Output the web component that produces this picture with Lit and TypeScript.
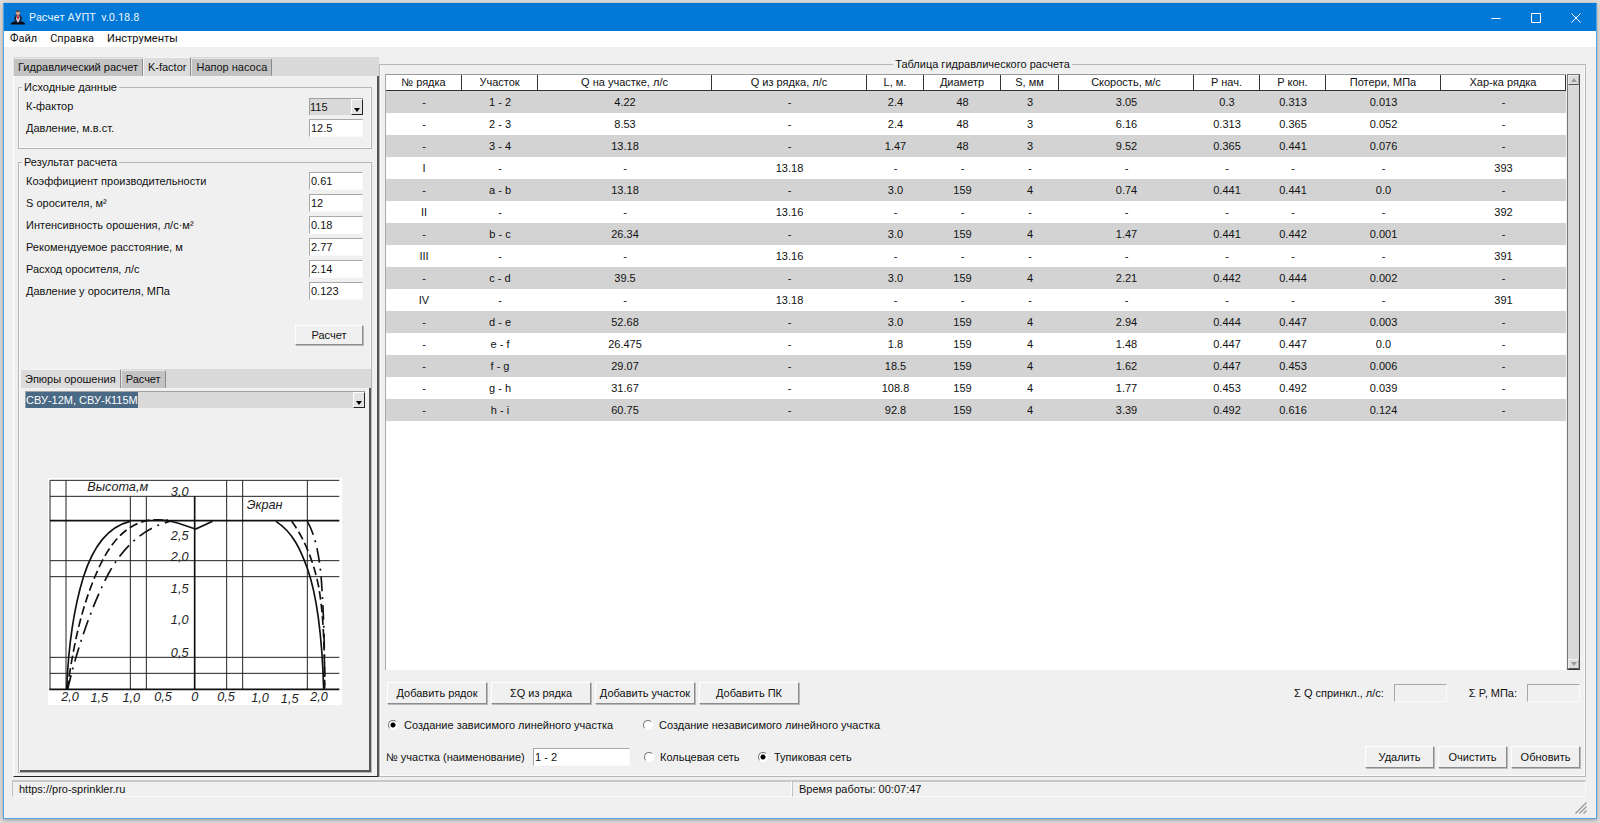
import { LitElement, html, svg, css } from "lit";
import { customElement, property, state } from "lit/decorators.js";
import { classMap } from "lit/directives/class-map.js";

const controls = css`
  * {
    box-sizing: border-box;
  }
  button,
  input,
  select {
    font: inherit;
    color: inherit;
    margin: 0;
    border-radius: 0;
  }
  .btn {
    height: 22px;
    padding: 0;
    background: #f0f0f0;
    border: 1px solid;
    border-color: #fff #8c8c8c #8c8c8c #fff;
    box-shadow: 1px 1px 0 #b9b9b9;
    white-space: nowrap;
  }
  .field {
    height: 18px;
    padding: 0 1px;
    background: #fff;
    border: 1px solid;
    border-color: #a8a8a8 #fafafa #fafafa #a8a8a8;
    outline: none;
  }
  .field:disabled {
    background: #f0f0f0;
  }
  fieldset {
    margin: 0;
    min-width: 0;
    border: 1px solid #b6b6b6;
    box-shadow: inset -1px -1px 0 #fafafa, inset 1px 0 0 #fafafa;
  }
  legend {
    padding: 0 2px;
    line-height: 14px;
  }
`;

interface SectionRow {
  cells: string[];
}

const COLUMNS: { title: string; width: number }[] = [
  { title: "№ рядка", width: 76 },
  { title: "Участок", width: 76 },
  { title: "Q на участке, л/с", width: 174 },
  { title: "Q из рядка, л/с", width: 155 },
  { title: "L, м.", width: 57 },
  { title: "Диаметр", width: 77 },
  { title: "S, мм", width: 58 },
  { title: "Скорость, м/с", width: 135 },
  { title: "P нач.", width: 66 },
  { title: "P кон.", width: 66 },
  { title: "Потери, МПа", width: 115 },
  { title: "Хар-ка рядка", width: 125 },
];

const section = (
  name: string, q: string, l: string, d: string, s: string,
  v: string, p1: string, p2: string, loss: string
): SectionRow => ({ cells: ["-", name, q, "-", l, d, s, v, p1, p2, loss, "-"] });

const branch = (no: string, q: string, k: string): SectionRow => ({
  cells: [no, "-", "-", q, "-", "-", "-", "-", "-", "-", "-", k],
});

const ROWS: SectionRow[] = [
  section("1 - 2", "4.22", "2.4", "48", "3", "3.05", "0.3", "0.313", "0.013"),
  section("2 - 3", "8.53", "2.4", "48", "3", "6.16", "0.313", "0.365", "0.052"),
  section("3 - 4", "13.18", "1.47", "48", "3", "9.52", "0.365", "0.441", "0.076"),
  branch("I", "13.18", "393"),
  section("a - b", "13.18", "3.0", "159", "4", "0.74", "0.441", "0.441", "0.0"),
  branch("II", "13.16", "392"),
  section("b - c", "26.34", "3.0", "159", "4", "1.47", "0.441", "0.442", "0.001"),
  branch("III", "13.16", "391"),
  section("c - d", "39.5", "3.0", "159", "4", "2.21", "0.442", "0.444", "0.002"),
  branch("IV", "13.18", "391"),
  section("d - e", "52.68", "3.0", "159", "4", "2.94", "0.444", "0.447", "0.003"),
  section("e - f", "26.475", "1.8", "159", "4", "1.48", "0.447", "0.447", "0.0"),
  section("f - g", "29.07", "18.5", "159", "4", "1.62", "0.447", "0.453", "0.006"),
  section("g - h", "31.67", "108.8", "159", "4", "1.77", "0.453", "0.492", "0.039"),
  section("h - i", "60.75", "92.8", "159", "4", "3.39", "0.492", "0.616", "0.124"),
];

/** Row of notebook tabs. */
@customElement("tab-strip")
export class TabStrip extends LitElement {
  @property({ attribute: false }) tabs: string[] = [];
  @property({ type: Number }) active = 0;

  static styles = css`
    :host {
      display: block;
      background: #d9d9d9;
    }
    .strip {
      display: flex;
      align-items: flex-end;
      height: 19px;
    }
    .tab {
      font: inherit;
      color: inherit;
      height: 18px;
      padding: 0 4px;
      margin: 0;
      background: #c3c3c3;
      border: 1px solid;
      border-color: #e6e6e6 #8a8a8a #c3c3c3 #e6e6e6;
      border-radius: 0 2px 0 0;
      white-space: nowrap;
    }
    .active {
      height: 19px;
      background: #dcdcdc;
      border-color: #f4f4f4 #8a8a8a #dcdcdc #f4f4f4;
      border-bottom: 0;
    }
  `;

  render() {
    return html`<div class="strip" role="tablist">
      ${this.tabs.map(
        (t, i) => html`<button
          class=${classMap({ tab: true, active: i === this.active })}
          role="tab"
          aria-selected=${i === this.active ? "true" : "false"}
          @click=${() => (this.active = i)}
        >${t}</button>`
      )}
    </div>`;
  }
}

/** Spray pattern diagram: height against distance from the sprinkler. */
@customElement("spray-diagram")
export class SprayDiagram extends LitElement {
  static styles = css`
    :host {
      display: block;
    }
    .chart {
      display: block;
      width: 294px;
      height: 227px;
      background: #fff;
      font-family: "Liberation Sans", Arial, sans-serif;
      font-style: italic;
      font-size: 38px;
      fill: #222;
    }
    .grid {
      stroke: #222;
      stroke-width: 3;
      fill: none;
    }
    .curve {
      stroke: #111;
      stroke-width: 5;
      fill: none;
    }
    .dash {
      stroke-dasharray: 26 12;
    }
    .dashdot {
      stroke-dasharray: 44 18 6 18;
    }
    .axis {
      text-anchor: middle;
    }
  `;

  render() {
    const vertical = [
      [60, 61], [108, 61], [301, 109], [349, 109], [590, 61], [638, 61], [832, 61],
    ];
    const horizontal = [61, 109, 302, 350, 592, 640];
    const heights: [string, number][] = [
      ["3,0", 108], ["2,5", 239], ["2,0", 302], ["1,5", 398], ["1,0", 493], ["0,5", 590],
    ];
    const distances: [string, number, number][] = [
      ["2,0", 120, 723], ["1,5", 208, 727], ["1,0", 304, 725], ["0,5", 399, 724], ["0", 494, 724],
      ["0,5", 588, 724], ["1,0", 690, 725], ["1,5", 779, 728], ["2,0", 867, 724],
    ];
    return html`<svg class="chart" viewBox="54 54 882 681" role="img" aria-label="Эпюры орошения">
      ${vertical.map(([x, y]) => svg`<path class="grid" d="M${x} ${y}V688"/>`)}
      ${horizontal.map((y) => svg`<path class="grid" d="M60 ${y}H928"/>`)}
      <path class="curve" d="M60 182H928M58 688H928M494 109V688" />
      <path class="curve" d="M110 688C115 560 130 450 160 352C188 262 235 200 300 184" />
      <path class="curve" d="M738 184C790 218 812 270 832 325C862 410 877 550 881 688" />
      <path class="curve dash" d="M112 688C132 540 160 420 212 312C245 245 290 190 362 180H414" />
      <path class="curve dash" d="M785 184C820 230 850 300 866 380C880 460 884 560 884 688" />
      <path class="curve dashdot" d="M113 688C140 570 184 440 235 342C270 276 324 220 384 196L420 184" />
      <path class="curve dashdot" d="M832 184C860 232 872 310 876 390C882 480 884 580 884 688" />
      <path class="curve" d="M370 180C420 178 450 192 497 207L548 184" />
      <text x="172" y="94">Высота,м</text>
      <text x="650" y="147">Экран</text>
      ${heights.map(([t, y]) => svg`<text class="axis" x="449" y=${y}>${t}</text>`)}
      ${distances.map(([t, x, y]) => svg`<text class="axis" x=${x} y=${y}>${t}</text>`)}
    </svg>`;
  }
}

/** Left notebook with the K-factor calculation. */
@customElement("k-factor-panel")
export class KFactorPanel extends LitElement {
  static styles = [
    controls,
    css`
      :host {
        display: flex;
        flex-direction: column;
      }
      .pane {
        flex: 1;
        display: flex;
        flex-direction: column;
        gap: 6px;
        padding: 4px 5px 3px 4px;
        border: solid;
        border-width: 0 2px 1px 1px;
        border-color: #333 #555 #222 #fff;
      }
      .source,
      .result {
        padding: 1px 0 0 1px;
      }
      .source {
        padding-bottom: 9px;
      }
      .result {
        flex: 1;
        display: flex;
        flex-direction: column;
      }
      .caption {
        margin-left: 2px;
      }
      .rows {
        padding: 0 8px 0 6px;
      }
      .row {
        display: grid;
        grid-template-columns: 1fr 54px;
        align-items: center;
        height: 22px;
      }
      .combo {
        display: grid;
        grid-template-columns: 1fr 12px;
        height: 17px;
        background: #d9d9d9;
        border-top: 1px solid #a0a0a0;
        border-left: 1px solid #a0a0a0;
      }
      .combo-select {
        grid-area: 1 / 1 / 2 / 3;
        appearance: none;
        min-width: 0;
        height: 16px;
        padding: 0;
        background: transparent;
        border: 0;
        outline: none;
      }
      .marked {
        color: #fff;
        background: linear-gradient(#4a6984, #4a6984) no-repeat 0 0 / 112px 100%;
      }
      .arrow {
        grid-area: 1 / 2;
        pointer-events: none;
        background: #e4e4e4;
        border: 1px solid;
        border-color: #fff #222 #222 #fff;
        display: flex;
        align-items: flex-end;
        justify-content: center;
        padding-bottom: 2px;
      }
      .actions {
        display: flex;
        justify-content: flex-end;
        padding: 23px 8px 24px 0;
      }
      .calc {
        width: 68px;
        height: 20px;
      }
      .inner {
        flex: 1;
        display: flex;
        flex-direction: column;
        padding: 3px 4px 0 5px;
        border: solid;
        border-width: 0 2px 2px 0;
        border-color: #555;
      }
      .figure {
        flex: 1;
        display: flex;
        align-items: center;
        justify-content: center;
        padding-top: 5px;
      }
    `,
  ];

  private results: [string, string][] = [
    ["Коэффициент производительности", "0.61"],
    ["S оросителя, м²", "12"],
    ["Интенсивность орошения, л/с·м²", "0.18"],
    ["Рекомендуемое расстояние, м", "2.77"],
    ["Расход оросителя, л/с", "2.14"],
    ["Давление у оросителя, МПа", "0.123"],
  ];

  private arrow() {
    return html`<span class="arrow"
      ><svg width="6" height="4" viewBox="0 0 6 4"><path d="M0 0H6L3 4Z" fill="#000" /></svg
    ></span>`;
  }

  render() {
    return html`
      <tab-strip .tabs=${["Гидравлический расчет", "K-factor", "Напор насоса"]} .active=${1}></tab-strip>
      <div class="pane">
        <fieldset class="source">
          <legend class="caption">Исходные данные</legend>
          <div class="rows">
            <div class="row">
              <label for="kf">К-фактор</label>
              <span class="combo">
                <select class="combo-select" id="kf"><option>115</option></select>
                ${this.arrow()}
              </span>
            </div>
            <div class="row">
              <label for="pressure">Давление, м.в.ст.</label>
              <input class="field" id="pressure" value="12.5" />
            </div>
          </div>
        </fieldset>
        <fieldset class="result">
          <legend class="caption">Результат расчета</legend>
          <div class="rows">
            ${this.results.map(
              ([name, value], i) => html`<div class="row">
                <label for="res${i}">${name}</label>
                <input class="field" id="res${i}" .value=${value} />
              </div>`
            )}
          </div>
          <div class="actions"><button class="btn calc">Расчет</button></div>
          <tab-strip .tabs=${["Эпюры орошения", "Расчет"]} .active=${0}></tab-strip>
          <div class="inner">
            <span class="combo">
              <select class="combo-select marked" aria-label="Ороситель">
                <option>СВУ-12М, СВУ-К115М</option>
              </select>
              ${this.arrow()}
            </span>
            <div class="figure"><spray-diagram></spray-diagram></div>
          </div>
        </fieldset>
      </div>
    `;
  }
}

/** Table of the hydraulic calculation with the controls below it. */
@customElement("hydraulic-table")
export class HydraulicTable extends LitElement {
  @state() private kind = 0;
  @state() private net = 1;

  static styles = [
    controls,
    css`
      :host {
        display: flex;
        min-width: 0;
      }
      .group {
        flex: 1;
        display: flex;
        flex-direction: column;
        padding: 3px 5px 8px 5px;
      }
      .title {
        margin: 0 auto;
      }
      .view {
        flex: 1;
        display: grid;
        grid-template-columns: 1fr 13px;
        gap: 1px;
        margin-bottom: 12px;
      }
      .sheet {
        background: #fff;
        border-top: 1px solid #999;
        border-left: 1px solid #aaa;
      }
      .grid {
        width: 100%;
        table-layout: fixed;
        border-collapse: separate;
        border-spacing: 0;
        text-align: center;
      }
      .head {
        height: 16px;
        padding: 0;
        font-weight: normal;
        line-height: 15px;
        border-right: 1px solid #333;
        border-bottom: 1px solid #333;
        white-space: nowrap;
      }
      .cell {
        height: 22px;
        padding: 0;
      }
      .odd {
        background: #d3d3d3;
      }
      .scroll {
        display: flex;
        flex-direction: column;
        justify-content: space-between;
        background: #d9d9d9;
        border: 1px solid;
        border-color: #777 #444 #333 #777;
      }
      .scroll-btn {
        display: flex;
        align-items: center;
        justify-content: center;
        height: 10px;
        padding: 0;
        background: #dcdcdc;
        border: 1px solid;
        border-color: #eee #aaa #555 #eee;
      }
      .line {
        display: flex;
        align-items: center;
        height: 22px;
      }
      .buttons {
        gap: 4px;
        padding-left: 2px;
      }
      .wide {
        width: 100px;
      }
      .mid {
        width: 69px;
      }
      .sums {
        display: flex;
        align-items: center;
        gap: 10px;
        margin-left: auto;
      }
      .second {
        margin-left: 12px;
      }
      .sum {
        width: 53px;
      }
      .kinds {
        margin: 10px 0;
        padding-left: 3px;
      }
      .name {
        width: 97px;
      }
      .bottom {
        padding-left: 1px;
      }
      .name-label {
        width: 147px;
      }
      .radio {
        display: flex;
        align-items: center;
        gap: 6px;
        white-space: nowrap;
      }
      .first {
        width: 255px;
      }
      .ring {
        width: 114px;
        margin-left: 14px;
      }
      .dot {
        appearance: none;
        width: 10px;
        height: 10px;
        border-radius: 50%;
        background: #fff;
        border: 1px solid;
        border-color: #777 #fff #fff #777;
      }
      .dot:checked {
        background: radial-gradient(circle at center, #000 0 2px, #fff 3px);
      }
      .trio {
        display: flex;
        gap: 4px;
        margin-left: auto;
      }
    `,
  ];

  render() {
    return html`<fieldset class="group">
      <legend class="title">Таблица гидравлического расчета</legend>
      <div class="view">
        <div class="sheet">
          <table class="grid">
            <colgroup>
              ${COLUMNS.map((c) => html`<col style="width:${c.width}px" />`)}
            </colgroup>
            <thead>
              <tr>${COLUMNS.map((c) => html`<th class="head" scope="col">${c.title}</th>`)}</tr>
            </thead>
            <tbody>
              ${ROWS.map(
                (r, i) => html`<tr class=${classMap({ odd: i % 2 === 0 })}>
                  ${r.cells.map((c) => html`<td class="cell">${c}</td>`)}
                </tr>`
              )}
            </tbody>
          </table>
        </div>
        <div class="scroll">
          <button class="scroll-btn" aria-label="Вверх">
            <svg width="6" height="4" viewBox="0 0 6 4"><path d="M0 4H6L3 0Z" fill="#999" /></svg>
          </button>
          <button class="scroll-btn" aria-label="Вниз">
            <svg width="6" height="4" viewBox="0 0 6 4"><path d="M0 0H6L3 4Z" fill="#999" /></svg>
          </button>
        </div>
      </div>
      <div class="line buttons">
        <button class="btn wide">Добавить рядок</button>
        <button class="btn wide">ΣQ из рядка</button>
        <button class="btn wide">Добавить участок</button>
        <button class="btn wide">Добавить ПК</button>
        <div class="sums">
          <label for="sq">Σ Q спринкл., л/с:</label>
          <input class="field sum" id="sq" disabled />
          <label class="second" for="sp">Σ P, МПа:</label>
          <input class="field sum" id="sp" disabled />
        </div>
      </div>
      <div class="line kinds">
        <label class="radio first">
          <input class="dot" type="radio" name="kind" .checked=${this.kind === 0} @change=${() => (this.kind = 0)} />
          Создание зависимого линейного участка
        </label>
        <label class="radio">
          <input class="dot" type="radio" name="kind" .checked=${this.kind === 1} @change=${() => (this.kind = 1)} />
          Создание независимого линейного участка
        </label>
      </div>
      <div class="line bottom">
        <label class="name-label" for="name">№ участка (наименование)</label>
        <input class="field name" id="name" value="1 - 2" />
        <label class="radio ring">
          <input class="dot" type="radio" name="net" .checked=${this.net === 0} @change=${() => (this.net = 0)} />
          Кольцевая сеть
        </label>
        <label class="radio">
          <input class="dot" type="radio" name="net" .checked=${this.net === 1} @change=${() => (this.net = 1)} />
          Тупиковая сеть
        </label>
        <div class="trio">
          <button class="btn mid">Удалить</button>
          <button class="btn mid">Очистить</button>
          <button class="btn mid">Обновить</button>
        </div>
      </div>
    </fieldset>`;
  }
}

@customElement("app-root")
export class AppRoot extends LitElement {
  static styles = css`
    :host {
      display: flex;
      box-sizing: border-box;
      min-height: 100vh;
      padding: 3px 3px 4px;
      background: #dcdcdc;
      font: 11px "Liberation Sans", Arial, sans-serif;
      color: #111;
    }
    * {
      box-sizing: border-box;
    }
    .window {
      flex: 1;
      min-width: 0;
      display: flex;
      flex-direction: column;
      background: #f0f0f0;
      border: 1px solid #5ba3dc;
      border-top-color: #0078d7;
      box-shadow: 0 1px 4px #999;
    }
    .titlebar {
      display: flex;
      align-items: center;
      height: 27px;
      padding-left: 7px;
      background: #0078d7;
      color: #e8f2fb;
      font-family: Roboto, "Open Sans", sans-serif;
    }
    .caption {
      flex: 1;
      margin-left: 4px;
      white-space: pre;
    }
    .sys {
      display: flex;
      align-items: center;
      justify-content: center;
      width: 40px;
      height: 27px;
      padding: 0;
      border: 0;
      background: transparent;
    }
    .menu {
      display: flex;
      gap: 13px;
      height: 16px;
      padding-left: 6px;
      background: #fff;
      font-family: Roboto, "Open Sans", sans-serif;
      line-height: 16px;
    }
    .item {
      font: inherit;
      color: inherit;
      padding: 0;
      border: 0;
      background: transparent;
    }
    .work {
      flex: 1;
      display: grid;
      grid-template-columns: 366px minmax(0, 1fr);
      padding: 10px 10px 3px 9px;
    }
    .status {
      display: grid;
      grid-template-columns: 780px 1fr;
      margin: 0 10px 0 8px;
    }
    .slot {
      height: 17px;
      padding-left: 6px;
      line-height: 14px;
      border: 1px solid;
      border-width: 2px 1px 1px;
      border-color: #c8c8c8 #fafafa #fafafa #c0c0c0;
    }
    .foot {
      display: flex;
      justify-content: flex-end;
      align-items: flex-end;
      height: 21px;
      padding: 0 9px 4px 0;
    }
  `;

  render() {
    return html`<div class="window">
      <header class="titlebar">
        <svg width="14" height="15" viewBox="0 0 14 15" aria-hidden="true">
          <path d="M0 14.5V13L3 11.5H11L14 13V14.5Z" fill="#0a0a14" />
          <path d="M3 8L5 4.5H9L11 8L10 12H4Z" fill="#1b2440" />
          <path d="M6 5H8L9 9L7 13L5 9Z" fill="#d8dde6" />
          <path d="M6.5 5H7.5L8 8L7 10L6 8Z" fill="#c22" />
          <circle cx="7" cy="2.8" r="2.2" fill="#d9a38c" />
          <path d="M4.8 2.5C4.8 -0.4 9.2 -0.4 9.2 2.5L8.5 1.7H5.5Z" fill="#40302c" />
        </svg>
        <span class="caption">Расчет АУПТ  v.0.18.8</span>
        <button class="sys" aria-label="Свернуть">
          <svg width="10" height="10" viewBox="0 0 10 10"><path d="M0.5 5.5H9.5" stroke="#fff" /></svg>
        </button>
        <button class="sys" aria-label="Развернуть">
          <svg width="10" height="10" viewBox="0 0 10 10"><path d="M0.5 0.5H9.5V9.5H0.5Z" fill="none" stroke="#fff" /></svg>
        </button>
        <button class="sys" aria-label="Закрыть">
          <svg width="10" height="10" viewBox="0 0 10 10"><path d="M0.5 0.5L9.5 9.5M9.5 0.5L0.5 9.5" stroke="#fff" /></svg>
        </button>
      </header>
      <nav class="menu">
        <button class="item">Файл</button>
        <button class="item">Справка</button>
        <button class="item">Инструменты</button>
      </nav>
      <main class="work">
        <k-factor-panel></k-factor-panel>
        <hydraulic-table></hydraulic-table>
      </main>
      <footer class="status">
        <div class="slot">https://pro-sprinkler.ru</div>
        <div class="slot">Время работы: 00:07:47</div>
      </footer>
      <div class="foot">
        <svg width="12" height="12" viewBox="0 0 12 12" aria-hidden="true">
          <path d="M0.5 11.5L11.5 0.5M4.5 11.5L11.5 4.5M8.5 11.5L11.5 8.5" stroke="#999" stroke-width="1.3" />
        </svg>
      </div>
    </div>`;
  }
}
